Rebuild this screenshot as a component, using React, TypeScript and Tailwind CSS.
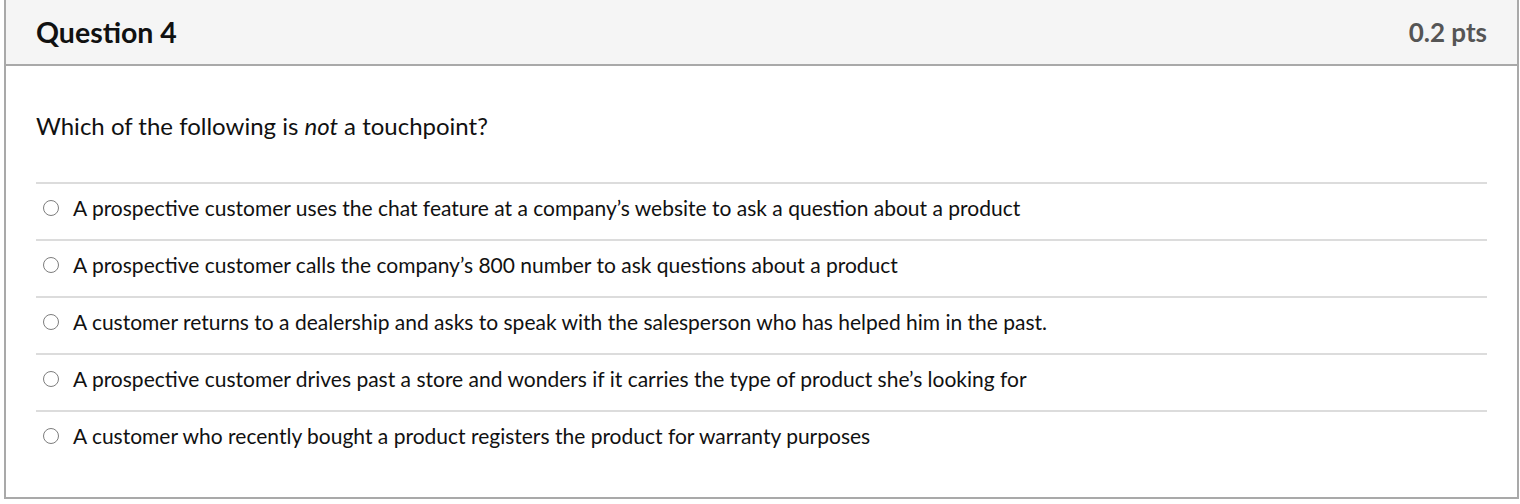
import React from 'react';

const answers = [
  'A prospective customer uses the chat feature at a company\u2019s website to ask a question about a product',
  'A prospective customer calls the company\u2019s 800 number to ask questions about a product',
  'A customer returns to a dealership and asks to speak with the salesperson who has helped him in the past.',
  'A prospective customer drives past a store and wonders if it carries the type of product she\u2019s looking for',
  'A customer who recently bought a product registers the product for warranty purposes',
];

function Radio() {
  return (
    <span className="w-[16px] h-[16px] rounded-full border-[1.5px] border-[#7d7d7d] bg-white shrink-0" />
  );
}

export default function App() {
  return (
    <div className="bg-white w-[1520px] h-[504px]" style={{ fontFamily: 'Lato, "Noto Sans", sans-serif' }}>
      <div className="ml-[4px] w-[1515px] h-[499px] border-2 border-t-0 border-[#a9a9a9] flex flex-col">
        <div className="h-[66px] shrink-0 bg-[#f5f5f5] border-b-2 border-[#a9a9a9] px-[30px] flex items-center justify-between">
          <h2 className="text-[28.5px] font-bold text-[#111]">Question 4</h2>
          <span className="text-[26px] font-bold text-[#555]">0.2 pts</span>
        </div>
        <div className="px-[30px] pt-[42px] pb-[30px] text-[#111]">
          <p className="text-[24px] leading-[36px]">
            Which of the following is <em>not</em> a touchpoint?
          </p>
          <div className="mt-[38px]">
            {answers.map((a) => (
              <div key={a} className="h-[57px] border-t-2 border-[#dcdcdc] flex items-center pl-[7px] pb-[8px] gap-[14px]">
                <Radio />
                <span className="text-[21px]">{a}</span>
              </div>
            ))}
          </div>
        </div>
      </div>
    </div>
  );
}
